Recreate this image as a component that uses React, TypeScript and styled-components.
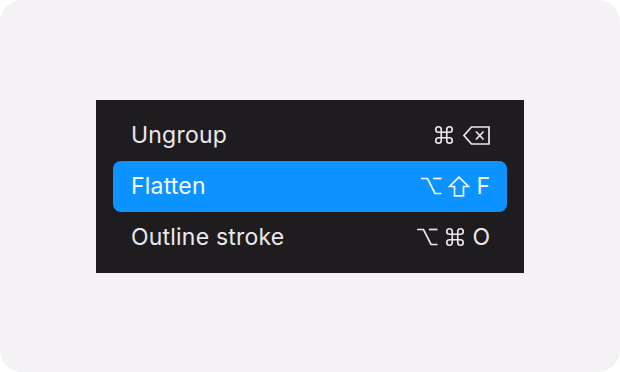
import React from "react";
import styled, { createGlobalStyle } from "styled-components";

const Global = createGlobalStyle`
  html, body { margin: 0; padding: 0; background: #ffffff; }
  body { font-family: Inter, "Noto Sans", sans-serif; }
`;

const Card = styled.div`
  width: 620px;
  height: 372px;
  background: #f4f2f5;
  border-radius: 22px;
  display: flex;
  align-items: center;
  justify-content: center;
`;

const Menu = styled.div`
  width: 428px;
  box-sizing: border-box;
  background: #1f1c20;
  padding: 10px 17px;
  display: flex;
  flex-direction: column;
`;

const Item = styled.div<{ $active?: boolean }>`
  height: 51px;
  display: flex;
  align-items: center;
  justify-content: space-between;
  padding: 0 17px 0 18px;
  border-radius: 8px;
  background: ${(p) => (p.$active ? "#0c93ff" : "transparent")};
  color: ${(p) => (p.$active ? "#f4f8ff" : "#ebe8ec")};
`;

const Label = styled.span`
  font-size: 23px;
  letter-spacing: 0.2px;
`;

const Shortcut = styled.span<{ $gap?: number }>`
  display: flex;
  align-items: center;
  gap: ${(p) => p.$gap ?? 6}px;
  font-size: 23px;
`;

const Glyph = styled.svg`
  display: block;
  fill: none;
  stroke: currentColor;
  stroke-width: 1.7;
  stroke-linejoin: miter;
  stroke-linecap: butt;
`;

const Cmd = () => (
  <Glyph width="22" height="22" viewBox="0 0 24 24" style={{ strokeWidth: 1.8 }}>
    <path d="M15 6v12a3 3 0 1 0 3-3H6a3 3 0 1 0 3 3V6a3 3 0 1 0-3 3h12a3 3 0 1 0-3-3" />
  </Glyph>
);

const Opt = () => (
  <Glyph width="22" height="18" viewBox="0 0 22 18">
    <path d="M1 1.5H7.5L15 16.5H21.5" />
    <path d="M13 1.5H21.5" />
  </Glyph>
);

const Shift = () => (
  <Glyph width="22" height="21" viewBox="0 0 22 21">
    <path d="M11 1.2L20.5 10.5H15.5V19.8H6.5V10.5H1.5Z" />
  </Glyph>
);

const Del = () => (
  <Glyph width="27" height="19" viewBox="0 0 27 19">
    <path d="M8.5 1H26V18H8.5L1 9.5Z" />
    <path d="M13 5.5L20.5 13.5M20.5 5.5L13 13.5" />
  </Glyph>
);

export default function App() {
  return (
    <>
      <Global />
      <Card>
        <Menu>
          <Item>
            <Label>Ungroup</Label>
            <Shortcut $gap={8}>
              <Cmd />
              <Del />
            </Shortcut>
          </Item>
          <Item $active>
            <Label>Flatten</Label>
            <Shortcut>
              <Opt />
              <Shift />
              <span>F</span>
            </Shortcut>
          </Item>
          <Item>
            <Label>Outline stroke</Label>
            <Shortcut>
              <Opt />
              <Cmd />
              <span>O</span>
            </Shortcut>
          </Item>
        </Menu>
      </Card>
    </>
  );
}
